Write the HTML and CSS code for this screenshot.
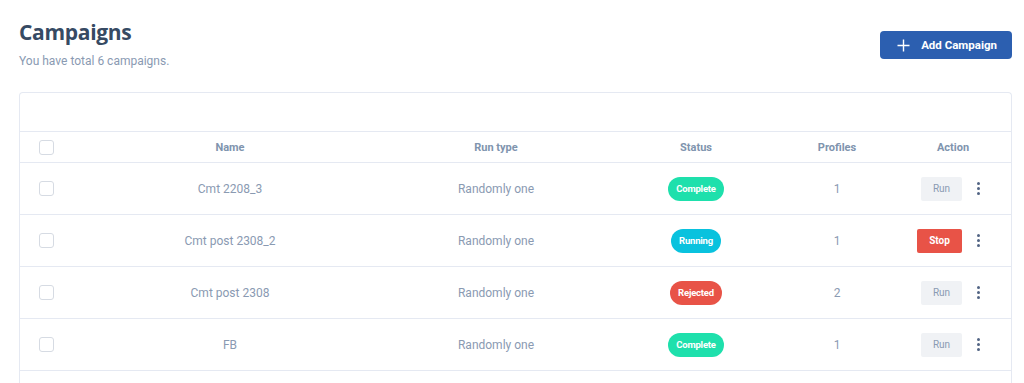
FILE: index.html
```html
<!DOCTYPE html>
<html lang="en">
<head>
    <meta charset="UTF-8">
    <title>Campaigns</title>
    <link rel="stylesheet" href="styles.css">
</head>
<body>
    <div class="page">
        <header class="page-header">
            <div class="title-block">
                <h1 class="page-title">Campaigns</h1>
                <p class="page-sub">You have total 6 campaigns.</p>
            </div>
            <button class="add-button">
                <svg width="13" height="13" viewBox="0 0 13 13"><path d="M6.5 0.5v12M0.5 6.5h12" stroke="#fff" stroke-width="1.4" fill="none"/></svg>
                <span>Add Campaign</span>
            </button>
        </header>

        <section class="card">
            <div class="card-top"></div>
            <div class="row head">
                <div class="cell"><span class="check"></span></div>
                <div class="cell">Name</div>
                <div class="cell">Run type</div>
                <div class="cell">Status</div>
                <div class="cell">Profiles</div>
                <div class="cell action-head">Action</div>
            </div>

            <div class="row">
                <div class="cell"><span class="check"></span></div>
                <div class="cell">Cmt 2208_3</div>
                <div class="cell">Randomly one</div>
                <div class="cell"><span class="badge complete">Complete</span></div>
                <div class="cell">1</div>
                <div class="cell actions"><button class="act run">Run</button><span class="dots"><i></i><i></i><i></i></span></div>
            </div>
            <div class="row">
                <div class="cell"><span class="check"></span></div>
                <div class="cell">Cmt post 2308_2</div>
                <div class="cell">Randomly one</div>
                <div class="cell"><span class="badge running">Running</span></div>
                <div class="cell">1</div>
                <div class="cell actions"><button class="act stop">Stop</button><span class="dots"><i></i><i></i><i></i></span></div>
            </div>
            <div class="row">
                <div class="cell"><span class="check"></span></div>
                <div class="cell">Cmt post 2308</div>
                <div class="cell">Randomly one</div>
                <div class="cell"><span class="badge rejected">Rejected</span></div>
                <div class="cell">2</div>
                <div class="cell actions"><button class="act run">Run</button><span class="dots"><i></i><i></i><i></i></span></div>
            </div>
            <div class="row">
                <div class="cell"><span class="check"></span></div>
                <div class="cell">FB</div>
                <div class="cell">Randomly one</div>
                <div class="cell"><span class="badge complete">Complete</span></div>
                <div class="cell">1</div>
                <div class="cell actions"><button class="act run">Run</button><span class="dots"><i></i><i></i><i></i></span></div>
            </div>
            <div class="row filler"></div>
        </section>
    </div>
</body>
</html>
```

FILE: styles.css
```css
* {
    margin: 0;
    padding: 0;
    box-sizing: border-box;
}

body {
    font-family: Roboto, "Liberation Sans", sans-serif;
    background-color: #fff;
    color: #8094ae;
    overflow: hidden;
}

.page {
    padding: 18px 12px 0 19px;
}

/* Header */
.page-header {
    display: flex;
    justify-content: space-between;
    align-items: flex-start;
    margin-bottom: 24px;
}

.page-title {
    font-family: "Open Sans", Roboto, sans-serif;
    font-size: 21px;
    font-weight: 700;
    color: #364a63;
    line-height: 28px;
    letter-spacing: -0.3px;
}

.page-sub {
    font-size: 12px;
    color: #8a9ab2;
    margin-top: 8px;
    line-height: 14px;
}

.add-button {
    display: flex;
    align-items: center;
    gap: 11px;
    height: 28px;
    margin-top: 13px;
    padding: 0 15px 0 17px;
    background-color: #2c5fb0;
    border: none;
    border-radius: 4px;
    color: #fff;
    font-family: Roboto, sans-serif;
    font-size: 11.5px;
    font-weight: 700;
}

/* Card */
.card {
    border: 1px solid #e5e9f2;
    border-radius: 4px;
    border-bottom: none;
}

.card-top {
    height: 38px;
}

.row {
    display: grid;
    grid-template-columns: 52px 316px 216px 184px 98px 124px;
    height: 52px;
    border-top: 1px solid #e5e9f2;
    font-size: 12px;
    color: #8a9ab2;
}

.row.head {
    height: 31px;
    font-size: 11px;
    font-weight: 700;
    color: #8094ae;
}

.cell {
    display: flex;
    align-items: center;
    justify-content: center;
}

.action-head {
    padding-left: 10px;
}

.check {
    width: 15px;
    height: 15px;
    border: 1px solid #d6dbe3;
    border-radius: 3px;
    background-color: #fff;
}

.badge {
    display: inline-block;
    height: 24px;
    line-height: 24px;
    padding: 0 8px;
    border-radius: 12px;
    color: #fff;
    font-size: 9.5px;
    font-weight: 700;
    letter-spacing: -0.2px;
}

.badge.complete {
    background-color: #1ee0ac;
}

.badge.running {
    background-color: #09c2de;
}

.badge.rejected {
    background-color: #e85347;
}

.actions {
    justify-content: flex-end;
    padding-right: 30px;
    gap: 15px;
}

.act {
    height: 24px;
    border: none;
    border-radius: 2px;
    font-family: Roboto, sans-serif;
    font-size: 10px;
}

.act.run {
    width: 41px;
    background-color: #f0f2f5;
    color: #8a9ab2;
}

.act.stop {
    width: 45px;
    background-color: #e85347;
    color: #fff;
    font-weight: 700;
}

.dots {
    display: flex;
    flex-direction: column;
    gap: 2px;
}

.dots i {
    display: block;
    width: 3px;
    height: 3px;
    border-radius: 50%;
    background-color: #526484;
}
```
